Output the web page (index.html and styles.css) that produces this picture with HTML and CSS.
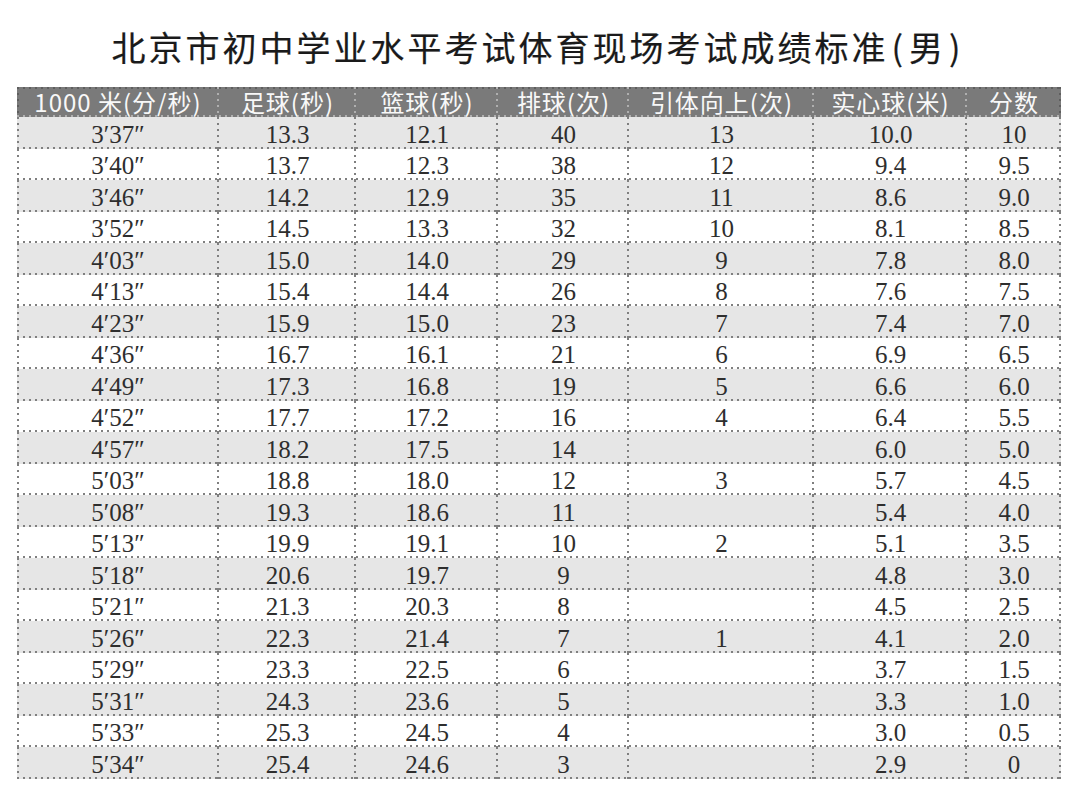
FILE: index.html
```html
<!DOCTYPE html>
<html lang="zh-CN">
<head>
<meta charset="utf-8">
<title>北京市初中学业水平考试体育现场考试成绩标准(男)</title>
<link rel="stylesheet" href="styles.css">
</head>
<body>
<div class="page">
  <h1 class="title">北京市初中学业水平考试体育现场考试成绩标准<span class="paren">(</span>男<span class="paren">)</span></h1>
  <table class="score-table">
    <colgroup>
      <col class="c1"><col class="c2"><col class="c3"><col class="c4"><col class="c5"><col class="c6"><col class="c7">
    </colgroup>
    <thead>
      <tr class="head">
        <th>1000 米(分/秒)</th><th>足球(秒)</th><th>篮球(秒)</th><th>排球(次)</th><th>引体向上(次)</th><th>实心球(米)</th><th>分数</th>
      </tr>
    </thead>
    <tbody>
      <tr class="odd"><td>3′37″</td><td>13.3</td><td>12.1</td><td>40</td><td>13</td><td>10.0</td><td>10</td></tr>
      <tr class="even"><td>3′40″</td><td>13.7</td><td>12.3</td><td>38</td><td>12</td><td>9.4</td><td>9.5</td></tr>
      <tr class="odd"><td>3′46″</td><td>14.2</td><td>12.9</td><td>35</td><td>11</td><td>8.6</td><td>9.0</td></tr>
      <tr class="even"><td>3′52″</td><td>14.5</td><td>13.3</td><td>32</td><td>10</td><td>8.1</td><td>8.5</td></tr>
      <tr class="odd"><td>4′03″</td><td>15.0</td><td>14.0</td><td>29</td><td>9</td><td>7.8</td><td>8.0</td></tr>
      <tr class="even"><td>4′13″</td><td>15.4</td><td>14.4</td><td>26</td><td>8</td><td>7.6</td><td>7.5</td></tr>
      <tr class="odd"><td>4′23″</td><td>15.9</td><td>15.0</td><td>23</td><td>7</td><td>7.4</td><td>7.0</td></tr>
      <tr class="even"><td>4′36″</td><td>16.7</td><td>16.1</td><td>21</td><td>6</td><td>6.9</td><td>6.5</td></tr>
      <tr class="odd"><td>4′49″</td><td>17.3</td><td>16.8</td><td>19</td><td>5</td><td>6.6</td><td>6.0</td></tr>
      <tr class="even"><td>4′52″</td><td>17.7</td><td>17.2</td><td>16</td><td>4</td><td>6.4</td><td>5.5</td></tr>
      <tr class="odd"><td>4′57″</td><td>18.2</td><td>17.5</td><td>14</td><td></td><td>6.0</td><td>5.0</td></tr>
      <tr class="even"><td>5′03″</td><td>18.8</td><td>18.0</td><td>12</td><td>3</td><td>5.7</td><td>4.5</td></tr>
      <tr class="odd"><td>5′08″</td><td>19.3</td><td>18.6</td><td>11</td><td></td><td>5.4</td><td>4.0</td></tr>
      <tr class="even"><td>5′13″</td><td>19.9</td><td>19.1</td><td>10</td><td>2</td><td>5.1</td><td>3.5</td></tr>
      <tr class="odd"><td>5′18″</td><td>20.6</td><td>19.7</td><td>9</td><td></td><td>4.8</td><td>3.0</td></tr>
      <tr class="even"><td>5′21″</td><td>21.3</td><td>20.3</td><td>8</td><td></td><td>4.5</td><td>2.5</td></tr>
      <tr class="odd"><td>5′26″</td><td>22.3</td><td>21.4</td><td>7</td><td>1</td><td>4.1</td><td>2.0</td></tr>
      <tr class="even"><td>5′29″</td><td>23.3</td><td>22.5</td><td>6</td><td></td><td>3.7</td><td>1.5</td></tr>
      <tr class="odd"><td>5′31″</td><td>24.3</td><td>23.6</td><td>5</td><td></td><td>3.3</td><td>1.0</td></tr>
      <tr class="even"><td>5′33″</td><td>25.3</td><td>24.5</td><td>4</td><td></td><td>3.0</td><td>0.5</td></tr>
      <tr class="odd"><td>5′34″</td><td>25.4</td><td>24.6</td><td>3</td><td></td><td>2.9</td><td>0</td></tr>
    </tbody>
  </table>
</div>
</body>
</html>
```
FILE: styles.css
```css
html, body {
  margin: 0;
  padding: 0;
  background: #ffffff;
}

.page {
  width: 1080px;
  padding: 27px 0 0 17px;
  box-sizing: border-box;
}

.title {
  margin: 0 0 20px 0;
  width: 1044px;
  height: 40px;
  line-height: 40px;
  text-align: center;
  font-family: "Noto Sans CJK SC", "Noto Sans", sans-serif;
  font-weight: 400;
  font-size: 34px;
  letter-spacing: 3px;
  color: #1a1a1a;
  -webkit-text-stroke: 0.2px #1a1a1a;
}

.title .paren {
  padding: 0 3px;
}

.score-table {
  border-collapse: separate;
  border-spacing: 0;
  table-layout: fixed;
  width: 1044px;
}

.c1 { width: 202px; }
.c2 { width: 137px; }
.c3 { width: 142px; }
.c4 { width: 131px; }
.c5 { width: 185px; }
.c6 { width: 153px; }
.c7 { width: 94px; }

.score-table th,
.score-table td {
  padding: 0;
  text-align: center;
  vertical-align: middle;
  white-space: nowrap;
  --dot: #7f7f7f;
  background-image:
    linear-gradient(to right, var(--dot) 2px, transparent 2px),
    linear-gradient(to bottom, var(--dot) 2px, transparent 2px);
  background-size: 6px 2px, 2px 6px;
  background-position: left bottom, right top;
  background-repeat: repeat-x, repeat-y;
}

.score-table td:first-child {
  background-image:
    linear-gradient(to right, var(--dot) 2px, transparent 2px),
    linear-gradient(to bottom, var(--dot) 2px, transparent 2px),
    linear-gradient(to bottom, var(--dot) 2px, transparent 2px);
  background-size: 6px 2px, 2px 6px, 2px 6px;
  background-position: left bottom, right top, left top;
  background-repeat: repeat-x, repeat-y, repeat-y;
}

.head th {
  height: 30px;
  background-color: #7a7a7a;
  --dot: #b0b0b0;
  color: #f8f8f8;
  font-family: "Noto Sans CJK SC", "Noto Sans", sans-serif;
  font-weight: 400;
  font-size: 24px;
  letter-spacing: 1px;
  line-height: 30px;
  background-image:
    linear-gradient(to right, var(--dot) 2px, transparent 2px),
    linear-gradient(to bottom, var(--dot) 2px, transparent 2px),
    linear-gradient(to right, #5e5e5e 2px, transparent 2px);
  background-size: 6px 2px, 2px 6px, 6px 2px;
  background-position: left bottom, right top, left top;
  background-repeat: repeat-x, repeat-y, repeat-x;
}

.head th:first-child {
  background-image:
    linear-gradient(to right, var(--dot) 2px, transparent 2px),
    linear-gradient(to bottom, var(--dot) 2px, transparent 2px),
    linear-gradient(to right, #5e5e5e 2px, transparent 2px),
    linear-gradient(to bottom, #5e5e5e 2px, transparent 2px);
  background-size: 6px 2px, 2px 6px, 6px 2px, 2px 6px;
  background-position: left bottom, right top, left top, left top;
  background-repeat: repeat-x, repeat-y, repeat-x, repeat-y;
}

.head th:last-child {
  background-image:
    linear-gradient(to right, var(--dot) 2px, transparent 2px),
    linear-gradient(to bottom, #5e5e5e 2px, transparent 2px),
    linear-gradient(to right, #5e5e5e 2px, transparent 2px);
}

.score-table td {
  height: 31.5px;
  padding-top: 3px;
  box-sizing: border-box;
  font-family: "Liberation Serif", "DejaVu Serif", serif;
  font-size: 25px;
  line-height: 27px;
  color: #2e2e2e;
}

.odd td { background-color: #e6e6e6; }
.even td { background-color: #ffffff; }
```
